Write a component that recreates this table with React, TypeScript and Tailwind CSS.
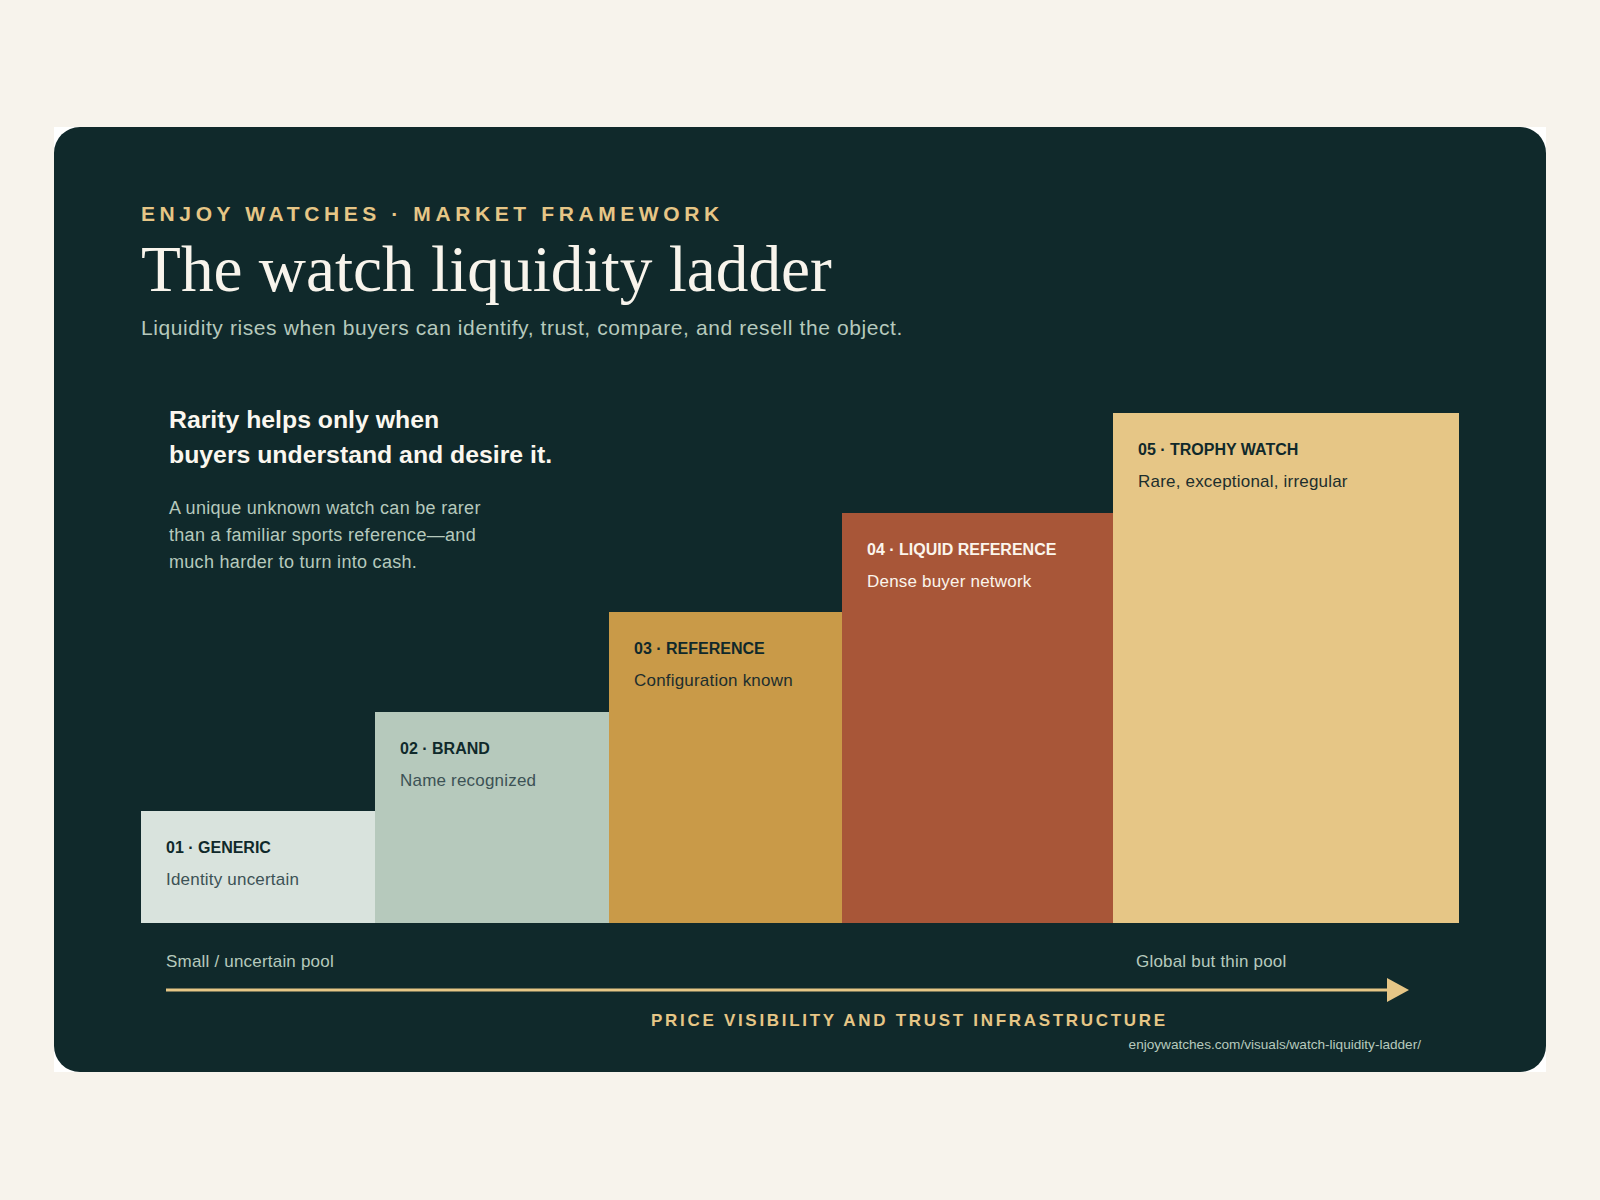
const steps = [
  {
    id: "01",
    name: "GENERIC",
    note: "Identity uncertain",
    col: "col-start-1",
    h: "h-[112px]",
    bg: "bg-[#d9e3dd]",
    label: "text-[#10292b]",
    desc: "text-[#3c5255]",
  },
  {
    id: "02",
    name: "BRAND",
    note: "Name recognized",
    col: "col-start-2",
    h: "h-[211px]",
    bg: "bg-[#b6c9bc]",
    label: "text-[#10292b]",
    desc: "text-[#3c5255]",
  },
  {
    id: "03",
    name: "REFERENCE",
    note: "Configuration known",
    col: "col-start-3",
    h: "h-[311px]",
    bg: "bg-[#c99a48]",
    label: "text-[#10292b]",
    desc: "text-[#1d2e2d]",
  },
  {
    id: "04",
    name: "LIQUID REFERENCE",
    note: "Dense buyer network",
    col: "col-start-4",
    h: "h-[410px]",
    bg: "bg-[#a85638]",
    label: "text-[#fbf5ec]",
    desc: "text-[#fbf5ec]",
  },
  {
    id: "05",
    name: "TROPHY WATCH",
    note: "Rare, exceptional, irregular",
    col: "col-start-5",
    h: "h-[510px]",
    bg: "bg-[#e6c686]",
    label: "text-[#10292b]",
    desc: "text-[#1d2e2d]",
  },
];

export default function App() {
  return (
    <div className="min-h-[1200px] bg-[#f7f3ec] px-[54px] pt-[127px] font-['Liberation_Sans',Arial,sans-serif]">
      <div className="w-full h-[945px] bg-white">
        <div className="h-full rounded-[26px] bg-[#10292b] pl-[87px] pr-[87px] pt-[75px]">
          {/* Header */}
          <p className="text-[21px] leading-[24px] font-bold tracking-[4.6px] text-[#e6c686]">
            ENJOY WATCHES · MARKET FRAMEWORK
          </p>
          <h1 className="mt-[7px] font-['Liberation_Serif',Georgia,serif] text-[65.3px] leading-[72px] text-[#f8f4ec]">
            The watch liquidity ladder
          </h1>
          <p className="mt-[9px] text-[21px] leading-[28px] tracking-[0.6px] text-[#b6c9bd]">
            Liquidity rises when buyers can identify, trust, compare, and resell the object.
          </p>

          {/* Ladder */}
          <div className="mt-[60px] grid grid-cols-[234px_234px_233px_271px_346px] h-[521px]">
            <div className="col-start-1 col-span-3 row-start-1 self-start pl-[28px]">
              <h2 className="text-[24.8px] leading-[35px] font-bold text-[#fbf7ef]">
                Rarity helps only when
                <br />
                buyers understand and desire it.
              </h2>
              <p className="mt-[23px] text-[18px] leading-[27px] tracking-[0.3px] text-[#b6c9bd]">
                A unique unknown watch can be rarer
                <br />
                than a familiar sports reference—and
                <br />
                much harder to turn into cash.
              </p>
            </div>
            {steps.map((s) => (
              <div
                key={s.id}
                className={`${s.col} row-start-1 self-end ${s.h} ${s.bg} pl-[25px] pt-[27px]`}
              >
                <p className={`text-[16px] leading-[20px] font-bold ${s.label}`}>
                  {s.id} · {s.name}
                </p>
                <p className={`mt-[10px] text-[17px] leading-[24px] tracking-[0.2px] ${s.desc}`}>
                  {s.note}
                </p>
              </div>
            ))}
          </div>

          {/* Axis */}
          <div className="mt-[27px] grid grid-cols-[972px_346px] text-[17px] leading-[24px] tracking-[0.2px] text-[#b6c9bd]">
            <span className="pl-[25px]">Small / uncertain pool</span>
            <span className="pl-[23px]">Global but thin pool</span>
          </div>
          <svg className="mt-[4px] ml-[25px] block" width="1243" height="24" viewBox="0 0 1243 24">
            <rect x="0" y="10.5" width="1224" height="3" fill="#e6c686" />
            <polygon points="1221,0 1243,12 1221,24" fill="#e6c686" />
          </svg>
          <p className="mt-[9px] ml-[510px] text-[17px] leading-[20px] font-bold tracking-[2.7px] text-[#e6c686]">
            PRICE VISIBILITY AND TRUST INFRASTRUCTURE
          </p>
          <div className="mt-[6px] flex justify-end pr-[38px]">
            <span className="text-[13.6px] leading-[16px] text-[#b6c9bd]">
              enjoywatches.com/visuals/watch-liquidity-ladder/
            </span>
          </div>
        </div>
      </div>
    </div>
  );
}
